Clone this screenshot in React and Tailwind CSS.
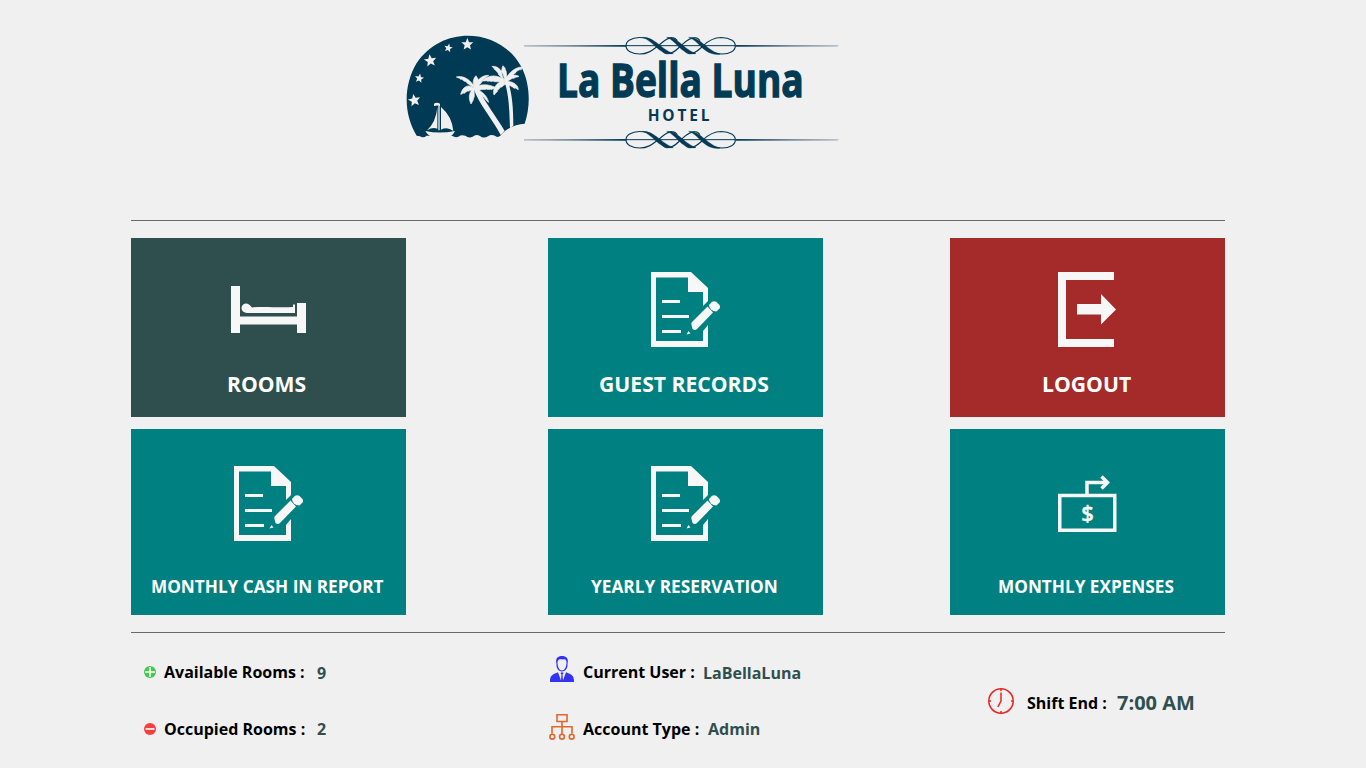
const STAR = "M0-19L5-6.500 18-6 8 2.800 11 15.500 0 8.600-11 15.500-8 2.800-18-6-5-6.500Z";

function Ornament({ y }) {
  return (
    <g transform={`translate(672 ${y})`} fill="none" stroke="#063a54" strokeWidth="3.5">
      <path d="M84 26C74 23 66 22.500 58 22.500C34 23 18 33 18 47C18 62 36 72 60 72C86 72 100 58 115 47S138 23 158 23" />
      <path d="M140 71C162 71 170 58 183 47S206 23 226 23" />
      <path d="M208 71C230 71 236 58 250 47C264 33 282 23 304 22.500C330 23 346 33 346 47C346 62 330 72 306 72C298 72 290 71 280 68" />
      <path d="M158 23Q166 24 172 32M226 23Q234 24 240 32M140 71Q134 70 128 64M208 71Q202 70 196 64" />
      <g fill="#063a54" stroke="#063a54" strokeWidth="1">
        <path d="M66 22C104 20 120 56 160 71C116 78 102 32 66 22Z" />
        <path d="M140 22C174 20 188 56 228 71C184 78 170 32 140 22Z" />
        <path d="M206 22C240 20 256 58 300 73C250 78 238 32 206 22Z" />
      </g>
      <path strokeWidth="3" d="M18 47H346" />
    </g>
  );
}

function Logo() {
  return (
    <svg className="block h-[130px] w-[450px]" viewBox="0 0 1350 390">
      <defs>
        <linearGradient id="fadeLeft" gradientUnits="userSpaceOnUse" x1="384" x2="690" y1="0" y2="0">
          <stop offset="0" stopColor="#b9c2ca" />
          <stop offset=".45" stopColor="#7c8f9c" />
          <stop offset="1" stopColor="#063a54" />
        </linearGradient>
        <linearGradient id="fadeRight" gradientUnits="userSpaceOnUse" x1="1019" x2="1325" y1="0" y2="0">
          <stop offset="0" stopColor="#063a54" />
          <stop offset=".55" stopColor="#7c8f9c" />
          <stop offset="1" stopColor="#b9c2ca" />
        </linearGradient>
      </defs>
      <path fill="#003a55" d="M62 332C22 268 22 180 62 114C100 58 158 32 215 32C285 32 345 68 376 125C402 175 405 240 386 296C362 297 340 306 318 326Q308 342 298 333Q286 326 276 334Q262 342 252 333Q240 326 230 335Q218 341 208 332Q196 328 187 335Q178 339 168 332L92 332Q82 341 72 334Z" />
      <g fill="#f0f0f0">
        <path transform="translate(214 58)" d={STAR} />
        <path transform="translate(157 69) rotate(12) scale(.72)" d={STAR} />
        <path transform="translate(103 107) rotate(-8) scale(1.03)" d={STAR} />
        <path transform="translate(70 160) rotate(10) scale(.76)" d={STAR} />
        <path transform="translate(55 226) rotate(-10) scale(1.03)" d={STAR} />
        <path d="M114 236Q122 231 132 236V243Q124 240 114 243ZM127 243H131V316H127ZM124 247Q120 292 93 316Q109 306 124 311ZM135 246Q168 274 172 318Q154 304 135 314ZM88 318Q130 327 177 318Q170 333 158 336H108Q96 332 88 318Z" />
        <path d="M232 190C250 240 288 280 314 330L326 318C302 276 270 236 245 188ZM324 165C340 210 340 260 342 310L352 302C352 250 349 205 334 162Z" />
        <path stroke="#f0f0f0" strokeWidth="2" d="M238 190C225 166 204 150 181 156C188 160 190 158 194 163C199 161 201 167 205 169C211 168 212 175 217 177ZM236 190C220 176 200 182 194 208C201 207 202 202 206 205C207 200 212 202 214 198C219 200 220 196 224 197ZM234 190C216 202 218 222 225 237C229 233 228 228 232 226C230 220 236 218 235 212ZM236 188C250 196 272 206 278 232C272 230 272 224 267 222C267 216 261 218 258 212C252 214 250 206 244 207ZM236 188C250 176 282 176 302 190C295 193 292 190 286 194C282 190 276 196 272 192C264 196 258 190 250 196ZM236 188C240 168 256 150 278 151C274 156 270 154 268 160C262 160 262 168 258 168C258 175 250 178 246 184ZM236 188C228 174 232 160 240 152C242 158 248 160 246 166C250 172 246 178 243 186Z" />
        <path stroke="#f0f0f0" strokeWidth="2" d="M326 165C322 140 308 122 288 124C291 129 295 129 296 134C301 134 301 141 306 143C306 150 313 152 316 158ZM326 166C306 148 276 148 259 168C267 169 270 165 276 169C281 166 286 172 291 168C298 173 306 168 314 173ZM324 168C302 170 288 192 294 210C299 207 298 202 304 200C304 193 311 194 312 187C319 188 322 180 328 178ZM326 168C346 168 366 176 367 194C361 192 360 187 354 190C352 184 347 187 343 182C338 184 334 178 328 178ZM326 166C340 140 360 126 378 126L376 134C368 133 367 138 362 138C360 146 354 144 350 151C344 152 341 162 334 166ZM325 165C314 148 316 132 321 122C325 127 328 128 328 134C333 140 331 152 332 162ZM326 164C334 150 352 146 369 154C363 158 358 155 354 160C347 158 344 165 334 168Z" />
      </g>
      <path stroke="url(#fadeLeft)" strokeWidth="5" d="M384 62.500H690V63M384 344.500H690V345" fill="none" />
      <path stroke="url(#fadeRight)" strokeWidth="5" d="M1019 62.500H1325V63M1019 344.500H1325V345" fill="none" />
      <Ornament y={15} />
      <Ornament y={297} />
      <text x="483" y="217" fontSize="141" fontWeight="700" fill="#003a55" stroke="#003a55" strokeWidth="4" textLength="740" lengthAdjust="spacingAndGlyphs" className="font-['Open_Sans',sans-serif]">La Bella Luna</text>
      <text x="755" y="287" fontSize="49" fontWeight="700" fill="#063a54" textLength="194" lengthAdjust="spacingAndGlyphs" className="font-['Open_Sans',sans-serif] tracking-[9px]">HOTEL</text>
    </svg>
  );
}

function BedIcon() {
  return (
    <svg className="block h-[47px] w-[75px]" viewBox="0 0 75 47" fill="#f7f7f7">
      <path d="M0 0H9V30.500H66V17H75V47H66V38.500H9V47H0Z" />
      <path d="M10.500 22C10.500 19.500 12.500 17.500 15.500 17.500C18 17.500 19.500 20 21 21.500C32 20 48 22 62 21V18.500H64V27H18C13 27 10.500 25 10.500 22Z" />
    </svg>
  );
}

function DocumentIcon() {
  return (
    <svg className="block h-[75px] w-[70px]" viewBox="0 0 70 75" fill="#f7f7f7">
      <path d="M1 0H41L58 16V29L53 34V20H38V5.500H6V69H53V59L58 53V75H1Z" />
      <path d="M12 28H30V31H12ZM12 43H39V46H12ZM12 58H31V61H12Z" />
      <path d="M57.500 34.500L63 40.500L47 57Q45 59 42.500 57L41.500 53Q40.500 51 43 49ZM38.500 59L40.500 61.500L36.500 62.500Z" />
      <path d="M59 33L62 29.800Q64.500 28.500 66.500 30L69.500 33Q70.500 35 69.500 36.500L66.500 39.500Q63 39.500 61 37.500Q59 35.500 59 33Z" />
    </svg>
  );
}

function ExitIcon() {
  return (
    <svg className="block h-[75px] w-[58px]" viewBox="0 0 58 75" fill="#f7f7f7">
      <path d="M0 0H56V8H8V67H56V75H0ZM19 32H43V22L58 37.500L43 52.500V42.500H19Z" />
    </svg>
  );
}

function ExpenseIcon() {
  return (
    <svg className="block h-[58px] w-[59px]" viewBox="0 0 59 58">
      <path fill="none" stroke="#f7f7f7" strokeWidth="3.5" d="M1.750 20.500H56.750V55.250H1.750ZM29 20V7.500H49" />
      <path fill="none" stroke="#f7f7f7" strokeWidth="3.5" d="M43.500 1.500L49.500 7.500L43.500 13.500" />
      <text x="29.500" y="46" textAnchor="middle" fontSize="22" fontWeight="600" fill="#f7f7f7" stroke="#f7f7f7" strokeWidth=".4" className="font-['Open_Sans',sans-serif]">$</text>
    </svg>
  );
}

function Tile({ className, icon, iconClass, label, labelClass }) {
  return (
    <button type="button" className={`flex w-[275px] flex-col items-start ${className}`}>
      <span className={iconClass}>{icon}</span>
      <span className={`mt-auto whitespace-nowrap font-bold text-white ${labelClass}`}>{label}</span>
    </button>
  );
}

function Status({ icon, label, value, labelClass, valueClass = "" }) {
  return (
    <div className="flex h-[57px] items-center">
      {icon}
      <span className={`whitespace-nowrap font-bold text-black ${labelClass}`}>{label}</span>
      <span className={`whitespace-nowrap font-bold text-[#2f4f4f] ${valueClass}`}>{value}</span>
    </div>
  );
}

function SignIcon({ color, d }) {
  return (
    <svg className="ml-[13px] block size-3 shrink-0" viewBox="0 0 12 12">
      <circle cx="6" cy="6" r="6" fill={color} />
      <path d={d} stroke="#fff" strokeWidth="1.7" />
    </svg>
  );
}

function UserIcon() {
  return (
    <svg className="mb-[6px] ml-[2px] block h-[26px] w-6 shrink-0" viewBox="0 0 24 26" fill="#3333f5">
      <path fillRule="evenodd" d="M6.500 8C5 2 8 0 12 0S19 2 17.500 8C18 11 16 15.500 12 15.500S6 11 6.500 8ZM7.500 6C7.500 11 9.500 14.500 12 14.500S16.500 11 16.500 6C16 3.500 15 3 13 3.500C10.500 3.500 8.500 2.500 7.500 6Z" />
      <path d="M0 26C0 20 1 19 8 16.200L11 24.500L11.500 18.500L10.500 17.200L11.500 16.200H12.500L13.500 17.200L12.500 18.500L13 24.500L16 16.200C23 19 24 20 24 26Z" />
    </svg>
  );
}

function TreeIcon() {
  return (
    <svg className="mb-1 ml-[1px] block size-[26px] shrink-0" viewBox="0 0 26 26" fill="none" stroke="#e0662f" strokeWidth="1.6">
      <path d="M8 .8H18V7.500H8ZM13 7.500V20M3 19.500V12.800H23V19.500" />
      <circle cx="3.300" cy="22.700" r="2.400" />
      <circle cx="13" cy="22.700" r="2.400" />
      <circle cx="22.700" cy="22.700" r="2.400" />
    </svg>
  );
}

function ClockIcon() {
  return (
    <svg className="mb-[3px] ml-[38px] block size-[26px] shrink-0" viewBox="0 0 26 26" fill="none" stroke="#f02020" strokeWidth="1.5">
      <circle cx="13" cy="13" r="12.200" />
      <path d="M13 1V3M13 23V25M1 13H3M23 13H25M13 4.500V13L9.800 19" />
    </svg>
  );
}

export default function App() {
  return (
    <main className="flex h-screen w-full flex-col overflow-hidden bg-[#f0f0f0] font-['Open_Sans',sans-serif]">
      <header className="h-[220px] pt-[25px] pl-[396px]">
        <Logo />
      </header>
      <div className="ml-[131px] w-[1094px]">
        <section className="grid h-[413px] grid-cols-[417px_402px_275px] grid-rows-[179px_186px] gap-y-3 border-y border-[#696969] pt-[17px]">
          <Tile className="bg-[#2f4f4f]" icon={<BedIcon />} iconClass="mt-12 ml-[100px]" label="ROOMS" labelClass="ml-[96px] mb-[19px] text-[21.15px] leading-[29px]" />
          <Tile className="bg-[#008080]" icon={<DocumentIcon />} iconClass="mt-[34px] ml-[102px]" label="GUEST RECORDS" labelClass="ml-[51px] mb-[19px] text-[21.15px] leading-[29px]" />
          <Tile className="bg-[#a52a2a]" icon={<ExitIcon />} iconClass="mt-[34px] ml-[108px]" label="LOGOUT" labelClass="ml-[92px] mb-[19px] text-[21.15px] leading-[29px]" />
          <Tile className="bg-[#008080]" icon={<DocumentIcon />} iconClass="mt-[37px] ml-[102px]" label="MONTHLY CASH IN REPORT" labelClass="ml-[20px] mb-4 text-[17.18px] leading-6" />
          <Tile className="bg-[#008080]" icon={<DocumentIcon />} iconClass="mt-[37px] ml-[102px]" label="YEARLY RESERVATION" labelClass="ml-[43px] mb-4 text-[17.25px] leading-6" />
          <Tile className="bg-[#008080]" icon={<ExpenseIcon />} iconClass="mt-[46px] ml-[108px]" label="MONTHLY EXPENSES" labelClass="ml-[48px] mb-4 text-[17.2px] leading-6" />
        </section>
        <footer className="grid grid-cols-[417px_402px_275px] items-center pt-[10px]">
          <div>
            <Status icon={<SignIcon color="#43c94b" d="M6 1V11M1 6H11" />} label="Available Rooms :" labelClass="ml-2 w-[153px]" value="9" valueClass="pt-0.5" />
            <Status icon={<SignIcon color="#fa3c3c" d="M1.500 6H10.500" />} label="Occupied Rooms :" labelClass="ml-2 w-[153px]" value="2" />
          </div>
          <div>
            <Status icon={<UserIcon />} label="Current User :" labelClass="ml-[9px] w-[120px]" value="LaBellaLuna" valueClass="pt-0.5" />
            <Status icon={<TreeIcon />} label="Account Type :" labelClass="ml-2 w-[125px]" value="Admin" />
          </div>
          <div className="pt-[5px]">
            <Status icon={<ClockIcon />} label="Shift End :" labelClass="ml-[13px] w-[90px]" value="7:00 AM" valueClass="text-xl" />
          </div>
        </footer>
      </div>
    </main>
  );
}
